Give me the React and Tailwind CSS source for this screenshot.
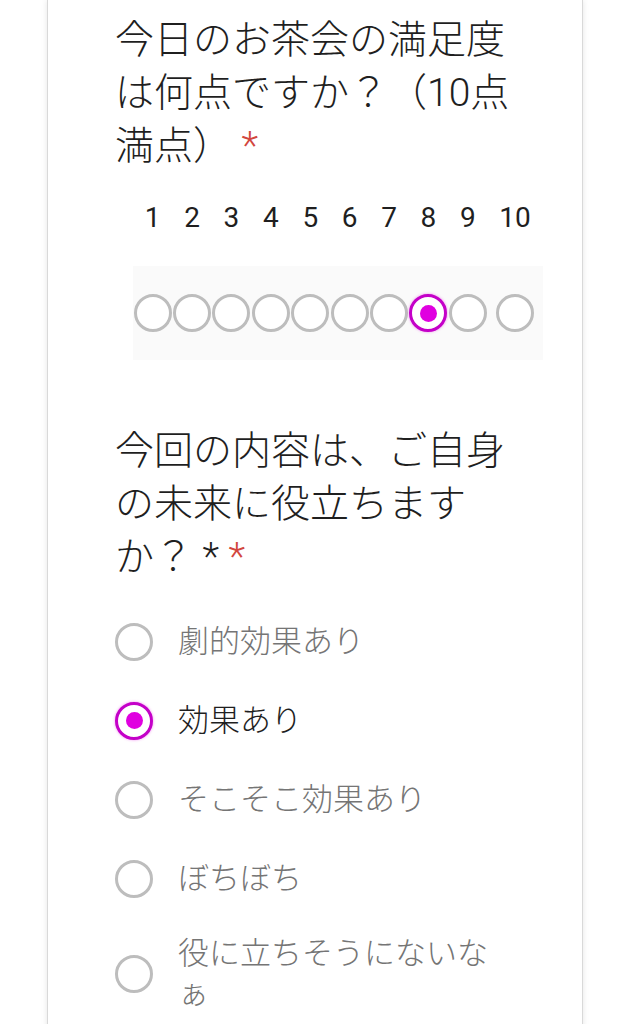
import React from 'react';

const scale = [1, 2, 3, 4, 5, 6, 7, 8, 9, 10];

const options = [
  { label: '劇的効果あり', checked: false },
  { label: '効果あり', checked: true },
  { label: 'そこそこ効果あり', checked: false },
  { label: 'ぼちぼち', checked: false },
  { label: '役に立ちそうにないなぁ', checked: false },
];

const Radio = ({ checked }) =>
  checked ? (
    <span className="flex h-[38px] w-[38px] shrink-0 items-center justify-center rounded-full border-[3.5px] border-[#c400c8] bg-white shadow-[0_0_3px_rgba(224,0,224,0.45)]">
      <span className="h-[17px] w-[17px] rounded-full bg-[#e000e0]" />
    </span>
  ) : (
    <span className="block h-[38px] w-[38px] shrink-0 rounded-full border-[3px] border-[#bdbdbd] bg-white" />
  );

const App = () => {
  return (
    <div lang="ja" className="min-h-screen bg-white font-[Roboto,'Noto_Sans_CJK_JP',sans-serif] text-[#1f1f1f]">
      <div className="ml-[47px] w-[536px] min-h-screen border-x border-[#d9d9d9] bg-white px-[67px] pt-[14px] shadow-[0_0_6px_rgba(0,0,0,0.10)]">
        {/* Question 1 */}
        <h2 className="text-[39px] leading-[53px] font-light">
          今日のお茶会の満足度は何点ですか？（10点満点） <span className="text-[#d2463d]">*</span>
        </h2>

        <div className="mt-[27px] ml-[18px] grid w-[410px] grid-cols-[repeat(9,39.4px)_55px] text-[28px] leading-[36px]">
          {scale.map((n) => (
            <span key={n} className="text-center">{n}</span>
          ))}
        </div>

        <div className="mt-[30px] ml-[18px] grid h-[94px] w-[410px] grid-cols-[repeat(9,39.4px)_55px] items-center bg-[#fafafa]">
          {scale.map((n) => (
            <div key={n} className="flex justify-center">
              <Radio checked={n === 8} />
            </div>
          ))}
        </div>

        {/* Question 2 */}
        <h2 className="mt-[65px] text-[39px] leading-[53px] font-light">
          今回の内容は、ご自身の未来に役立ちますか？ * <span className="text-[#d2463d]">*</span>
        </h2>

        <div className="mt-[18px] flex flex-col">
          {options.map((o, i) => (
            <label
              key={o.label}
              className={`flex items-center gap-[25px] ${i === options.length - 1 ? 'py-[16px]' : 'h-[79px]'}`}
            >
              <Radio checked={o.checked} />
              <span
                className={`min-w-0 flex-1 text-[31px] leading-[40px] font-light [line-break:loose] ${o.checked ? 'text-[#1f1f1f]' : 'text-[#757575]'}`}
              >
                {o.label}
              </span>
            </label>
          ))}
        </div>
      </div>
    </div>
  );
};

export default App;
